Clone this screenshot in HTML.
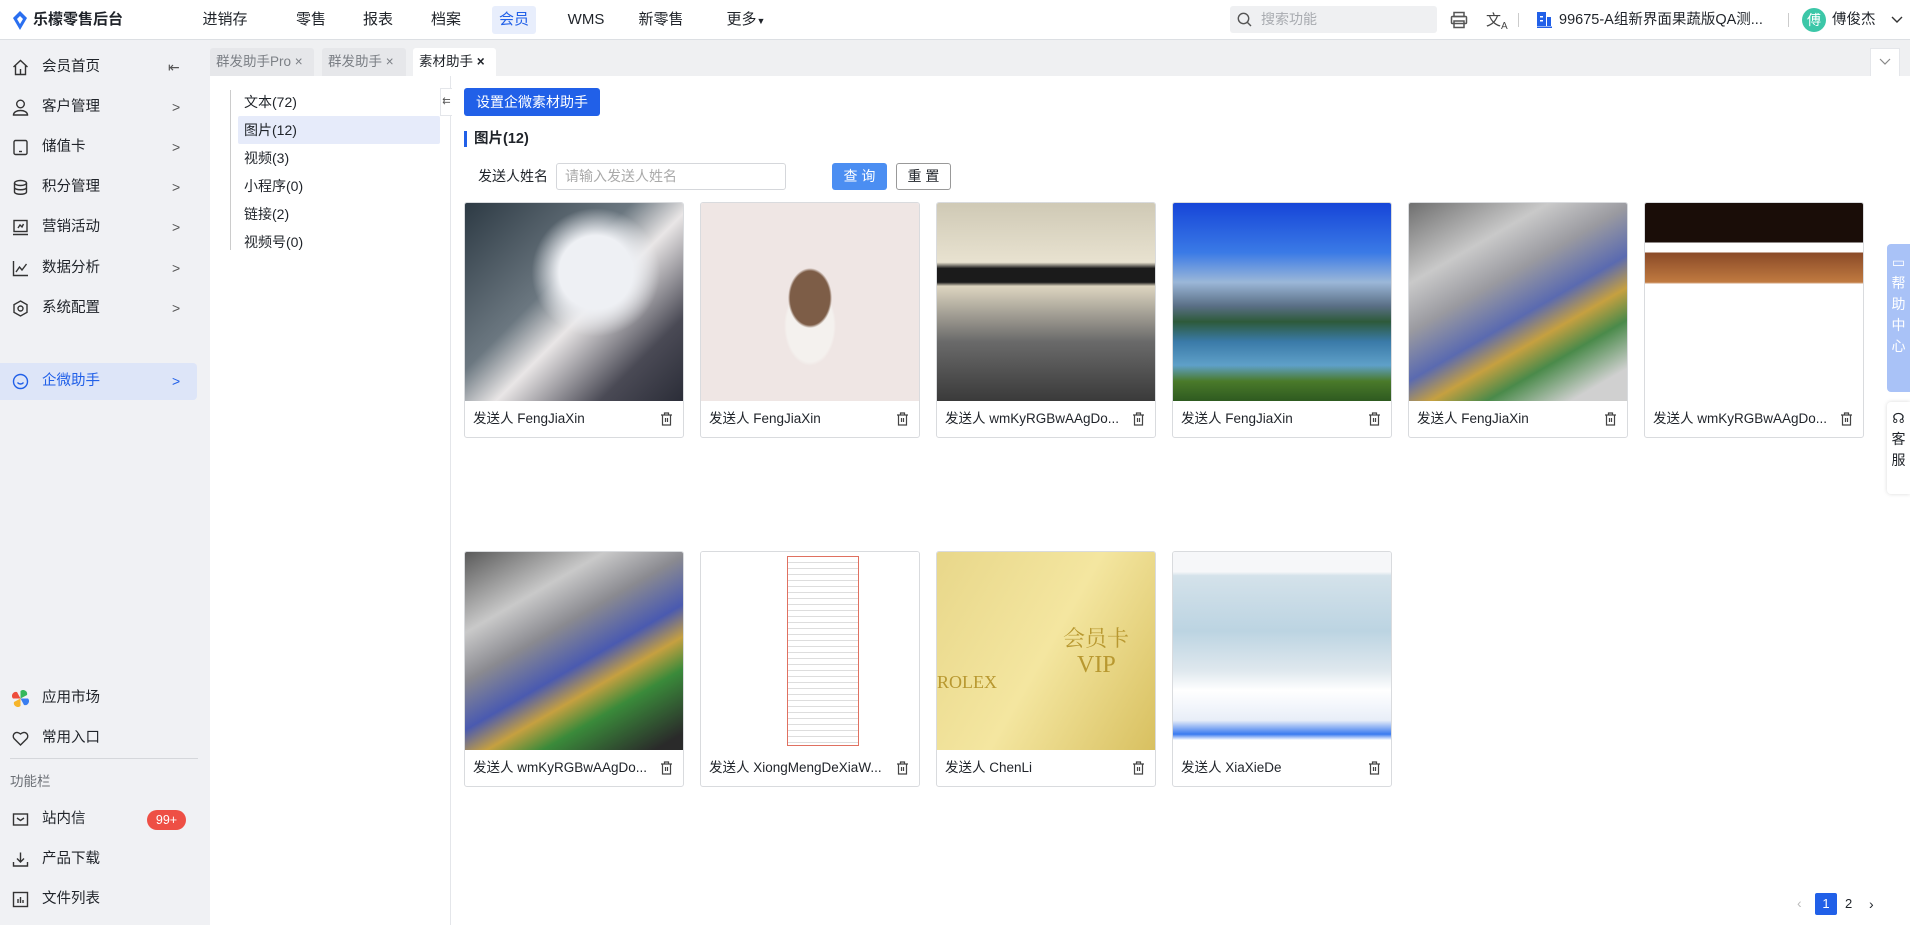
<!DOCTYPE html>
<html><head><meta charset="utf-8"><style>
*{box-sizing:border-box;margin:0;padding:0}
body{width:1910px;height:925px;overflow:hidden;background:#fff;font-family:"Liberation Sans","Noto Sans CJK SC",sans-serif;color:#1f2329;font-size:14px;position:relative}
.abs{position:absolute}
.top{left:0;top:0;width:1910px;height:40px;background:#fff;border-bottom:1px solid #dcdfe3}
.nav{top:0;height:40px;line-height:40px;font-size:15px;transform:translateX(-50%)}
.side{left:0;top:40px;width:210px;height:885px;background:#f0f1f4}
.si{left:0;width:197px;height:37px;font-size:14.5px;line-height:37px;padding-left:42px}
.si .ic{position:absolute;left:12px;top:10px;width:17px;height:17px}
.si .ar{position:absolute;left:172px;top:0;color:#555;font-size:14px}
.tabbar{left:210px;top:40px;width:1700px;height:36px;background:#eff0f2}
.tab{top:48px;height:28px;line-height:28px;font-size:13.5px;color:#7b7f85;background:#e6e7ea;padding:0 6px;border-radius:3px 3px 0 0}
.tree{left:210px;top:76px;width:241px;height:849px;border-right:1px solid #e4e6ea}
.ti{left:244px;font-size:14px;line-height:28px;height:28px}
.card{width:220px;height:236px;border:1px solid #d9dbde;border-radius:3px;overflow:hidden;background:#fff}
.card .img{height:198px}
.card .ft{height:36px;line-height:36px;padding-left:8px;font-size:13.5px;position:relative;white-space:nowrap}
.card .del{position:absolute;right:10px;top:11px;width:13px;height:14px}
</style></head><body>
<div class="abs top"></div>
<svg class="abs" style="left:12px;top:11px" width="16" height="19" viewBox="0 0 16 19"><path d="M8 0 L15 7 L8 19 L1 7Z" fill="#2a6ff0"/><path d="M8 5 L11 8 L8 13 L5 8Z" fill="#fff"/></svg>
<div class="abs" style="left:33px;top:10px;font-size:15px;font-weight:bold;line-height:20px">乐檬零售后台</div>
<div class="abs" style="left:492px;top:6px;width:44px;height:28px;background:#e8eefc;border-radius:3px"></div>
<div class="abs nav" style="left:225px">进销存</div>
<div class="abs nav" style="left:311px">零售</div>
<div class="abs nav" style="left:378px">报表</div>
<div class="abs nav" style="left:446px">档案</div>
<div class="abs nav" style="left:514px;color:#2160e8">会员</div>
<div class="abs nav" style="left:586px">WMS</div>
<div class="abs nav" style="left:661px">新零售</div>
<div class="abs nav" style="left:746px">更多<span style="font-size:9px">▼</span></div>
<div class="abs" style="left:1230px;top:6px;width:207px;height:27px;background:#eff0f2;border-radius:3px"></div>
<svg class="abs" style="left:1237px;top:12px" width="15" height="16"><circle cx="6.5" cy="6.5" r="5.2" fill="none" stroke="#555" stroke-width="1.4"/><path d="M10.5 10.5 L14 14" stroke="#555" stroke-width="1.4"/></svg>
<div class="abs" style="left:1261px;top:6px;line-height:27px;color:#a8abb0;font-size:14px">搜索功能</div>
<svg class="abs" style="left:1450px;top:11px" width="18" height="18" viewBox="0 0 18 18" fill="none" stroke="#555" stroke-width="1.5"><rect x="4" y="1.5" width="10" height="4"/><rect x="1.5" y="5.5" width="15" height="7" rx="1"/><rect x="4" y="10" width="10" height="6.5"/></svg>
<div class="abs" style="left:1486px;top:9px;font-size:15px;color:#444">文<sub style="font-size:10px">A</sub></div>
<div class="abs" style="left:1518px;top:13px;width:1px;height:14px;background:#ccc"></div>
<svg class="abs" style="left:1537px;top:12px" width="15" height="16"><rect x="0" y="0" width="9" height="14" fill="#2160e8"/><rect x="10" y="5" width="4" height="9" fill="#2160e8"/><rect x="0" y="14.5" width="15" height="1.5" fill="#2160e8"/><rect x="3" y="4" width="3" height="1.5" fill="#fff"/><rect x="3" y="8" width="3" height="1.5" fill="#fff"/></svg>
<div class="abs" style="left:1559px;top:10px;font-size:14.5px;line-height:20px">99675-A组新界面果蔬版QA测...</div>
<div class="abs" style="left:1788px;top:13px;width:1px;height:14px;background:#ccc"></div>
<div class="abs" style="left:1802px;top:8px;width:24px;height:24px;border-radius:50%;background:#3cc7a8;color:#fff;font-size:14px;text-align:center;line-height:24px">傅</div>
<div class="abs" style="left:1832px;top:10px;font-size:14.5px;line-height:20px">傅俊杰</div>
<svg class="abs" style="left:1891px;top:16px" width="12" height="8"><path d="M1 1 L6 6 L11 1" fill="none" stroke="#333" stroke-width="1.4"/></svg>

<div class="abs side"></div>
<div class="abs" style="left:0;top:363px;width:197px;height:37px;background:#dde5f8;border-radius:0 4px 4px 0"></div>
<div class="abs si" style="top:49px"><svg class="ic" viewBox="0 0 17 17" fill="none" stroke="#333" stroke-width="1.4"><path d="M1.5 8 L8.5 1.5 L15.5 8 M3.5 6.5 V15.5 H13.5 V6.5 M8.5 10 V15"/></svg>会员首页<span class="ar" style="left:168px">⇤</span></div>
<div class="abs si" style="top:89px"><svg class="ic" viewBox="0 0 17 17" fill="none" stroke="#333" stroke-width="1.4"><circle cx="8.5" cy="5" r="3.8"/><path d="M1.5 16 C1.5 10 15.5 10 15.5 16Z"/></svg>客户管理<span class="ar">&gt;</span></div>
<div class="abs si" style="top:129px"><svg class="ic" viewBox="0 0 17 17" fill="none" stroke="#333" stroke-width="1.4"><rect x="2" y="1.5" width="13" height="14" rx="1.5"/><path d="M7 12.5 H10"/></svg>储值卡<span class="ar">&gt;</span></div>
<div class="abs si" style="top:169px"><svg class="ic" viewBox="0 0 17 17" fill="none" stroke="#333" stroke-width="1.4"><ellipse cx="8.5" cy="4" rx="6" ry="2.5"/><path d="M2.5 4 V13 C2.5 16 14.5 16 14.5 13 V4 M2.5 8.5 C2.5 11.5 14.5 11.5 14.5 8.5"/></svg>积分管理<span class="ar">&gt;</span></div>
<div class="abs si" style="top:209px"><svg class="ic" viewBox="0 0 17 17" fill="none" stroke="#333" stroke-width="1.4"><rect x="2" y="1.5" width="13" height="11"/><path d="M1 15.5 H16 M6 9 L8 6 L10 8 L11.5 5"/></svg>营销活动<span class="ar">&gt;</span></div>
<div class="abs si" style="top:250px"><svg class="ic" viewBox="0 0 17 17" fill="none" stroke="#333" stroke-width="1.4"><path d="M1.5 1 V15.5 H16 M4 12 L7.5 7 L10 10 L14.5 4"/></svg>数据分析<span class="ar">&gt;</span></div>
<div class="abs si" style="top:290px"><svg class="ic" viewBox="0 0 17 17" fill="none" stroke="#333" stroke-width="1.4"><path d="M8.5 1 L15 4.7 V12.3 L8.5 16 L2 12.3 V4.7Z"/><circle cx="8.5" cy="8.5" r="2.5"/></svg>系统配置<span class="ar">&gt;</span></div>
<div class="abs si" style="top:363px;color:#2160e8"><svg class="ic" viewBox="0 0 17 17" fill="none" stroke="#2160e8" stroke-width="1.4"><circle cx="8.5" cy="8.5" r="7"/><path d="M5.5 9.5 C7 11.5 10 11.5 11.5 9.5"/></svg>企微助手<span class="ar" style="color:#2160e8">&gt;</span></div>
<div class="abs si" style="top:680px"><svg class="ic" viewBox="0 0 17 17"><path d="M8.5 8.5 L8.5 1 A4 4 0 0 1 15 5Z" fill="#34b75a"/><path d="M8.5 8.5 L16 8.5 A4 4 0 0 1 12 15Z" fill="#3a7ef0"/><path d="M8.5 8.5 L8.5 16 A4 4 0 0 1 2 12Z" fill="#f6b52a"/><path d="M8.5 8.5 L1 8.5 A4 4 0 0 1 5 2Z" fill="#ee4d3c"/></svg>应用市场</div>
<div class="abs si" style="top:720px"><svg class="ic" viewBox="0 0 17 17" fill="none" stroke="#333" stroke-width="1.4"><path d="M8.5 15 L2 8.5 C-0.5 5 3.5 0 8.5 4 C13.5 0 17.5 5 15 8.5Z"/></svg>常用入口</div>
<div class="abs" style="left:10px;top:758px;width:188px;height:1px;background:#d5d7db"></div>
<div class="abs" style="left:10px;top:770px;font-size:13.5px;color:#6b6f75">功能栏</div>
<div class="abs si" style="top:801px"><svg class="ic" viewBox="0 0 17 17" fill="none" stroke="#333" stroke-width="1.4"><rect x="1.5" y="3" width="14" height="11"/><path d="M5 7 L8.5 9.5 L12 7"/></svg>站内信</div>
<div class="abs" style="left:147px;top:810px;width:39px;height:20px;border-radius:10px;background:#ee4f45;color:#fff;font-size:12.5px;text-align:center;line-height:20px">99+</div>
<div class="abs si" style="top:841px"><svg class="ic" viewBox="0 0 17 17" fill="none" stroke="#333" stroke-width="1.4"><path d="M8.5 1.5 V10.5 M5 7.5 L8.5 11 L12 7.5 M1.5 11 V15 H15.5 V11"/></svg>产品下载</div>
<div class="abs si" style="top:881px"><svg class="ic" viewBox="0 0 17 17" fill="none" stroke="#333" stroke-width="1.4"><rect x="1.5" y="1.5" width="14" height="14"/><path d="M6 12 V8 M8.5 12 V6 M11 12 V9"/></svg>文件列表</div>

<div class="abs tabbar"></div>
<div class="abs tab" style="left:210px;width:104px">群发助手Pro ×</div>
<div class="abs tab" style="left:322px;width:84px">群发助手 ×</div>
<div class="abs tab" style="left:413px;width:83px;background:#fff;color:#1f2329">素材助手 <b>×</b></div>
<div class="abs" style="left:1870px;top:48px;width:30px;height:28px;background:#fff;border:1px solid #e4e6ea;border-bottom:none"></div>
<svg class="abs" style="left:1879px;top:58px" width="12" height="8"><path d="M1 1 L6 6 L11 1" fill="none" stroke="#888" stroke-width="1.2"/></svg>

<div class="abs tree"></div>
<div class="abs" style="left:230px;top:90px;width:1px;height:160px;background:#ccc"></div>
<div class="abs" style="left:238px;top:116px;width:202px;height:28px;background:#e6ebfa;border-radius:2px"></div>
<div class="abs ti" style="top:88px">文本(72)</div>
<div class="abs ti" style="top:116px">图片(12)</div>
<div class="abs ti" style="top:144px">视频(3)</div>
<div class="abs ti" style="top:172px">小程序(0)</div>
<div class="abs ti" style="top:200px">链接(2)</div>
<div class="abs ti" style="top:228px">视频号(0)</div>
<div class="abs" style="left:440px;top:88px;width:12px;height:28px;background:#fff;border:1px solid #e4e6ea;border-right:none;font-size:10px;line-height:26px;color:#555;text-align:center">⇇</div>

<div class="abs" style="left:464px;top:88px;width:136px;height:28px;background:#2160e8;border-radius:3px;color:#fff;font-size:14px;text-align:center;line-height:28px">设置企微素材助手</div>
<div class="abs" style="left:464px;top:131px;width:3px;height:16px;background:#2160e8"></div>
<div class="abs" style="left:474px;top:129px;font-size:14.5px;font-weight:bold;line-height:20px">图片(12)</div>
<div class="abs" style="left:478px;top:166px;font-size:14px;line-height:20px">发送人姓名</div>
<div class="abs" style="left:556px;top:163px;width:230px;height:27px;border:1px solid #d5d7db;border-radius:3px;padding-left:8px;line-height:25px;color:#aaa;font-size:14px">请输入发送人姓名</div>
<div class="abs" style="left:832px;top:163px;width:55px;height:27px;background:#4b8ef2;border-radius:3px;color:#fff;text-align:center;line-height:27px;font-size:14px">查 询</div>
<div class="abs" style="left:896px;top:163px;width:55px;height:27px;border:1px solid #999;border-radius:3px;text-align:center;line-height:25px;font-size:14px">重 置</div>

<div class="abs card" style="left:464px;top:202px"><div class="img" style="background:radial-gradient(circle at 60% 35%,#eef0f4 0 20%,transparent 35%),linear-gradient(135deg,#2d3a44,#6b7780 40%,#e9e6e6 55%,#4a4a55 80%,#2b2d38)"></div><div class="ft">发送人 FengJiaXin<svg class="del" viewBox="0 0 13 14" fill="none" stroke="#444" stroke-width="1.2"><path d="M1 3 H12 M4.5 3 V1 H8.5 V3 M2.5 3 V13 H10.5 V3 M5.5 6 V10 M7.5 6 V10"/></svg></div></div>
<div class="abs card" style="left:700px;top:202px"><div class="img" style="background:radial-gradient(ellipse 22px 30px at 50% 48%,#7d5d47 0 90%,transparent 100%),radial-gradient(ellipse 26px 40px at 50% 62%,#f4f1ee 0 90%,transparent 100%),#efe6e4"></div><div class="ft">发送人 FengJiaXin<svg class="del" viewBox="0 0 13 14" fill="none" stroke="#444" stroke-width="1.2"><path d="M1 3 H12 M4.5 3 V1 H8.5 V3 M2.5 3 V13 H10.5 V3 M5.5 6 V10 M7.5 6 V10"/></svg></div></div>
<div class="abs card" style="left:936px;top:202px"><div class="img" style="background:linear-gradient(180deg,#cfc9b5 0,#e8e2d0 30%,#1b1b1b 33% 40%,#ddd5c0 42%,#6a6a6a 70%,#3a3a3a)"></div><div class="ft">发送人 wmKyRGBwAAgDo...<svg class="del" viewBox="0 0 13 14" fill="none" stroke="#444" stroke-width="1.2"><path d="M1 3 H12 M4.5 3 V1 H8.5 V3 M2.5 3 V13 H10.5 V3 M5.5 6 V10 M7.5 6 V10"/></svg></div></div>
<div class="abs card" style="left:1172px;top:202px"><div class="img" style="background:linear-gradient(180deg,#1645d8 0,#3a7ae6 25%,#9bb7d8 40%,#5a6f86 52%,#2d5a3a 60%,#3a7aa8 70%,#5fa0c8 82%,#4a7a2a 90%,#2e5a20)"></div><div class="ft">发送人 FengJiaXin<svg class="del" viewBox="0 0 13 14" fill="none" stroke="#444" stroke-width="1.2"><path d="M1 3 H12 M4.5 3 V1 H8.5 V3 M2.5 3 V13 H10.5 V3 M5.5 6 V10 M7.5 6 V10"/></svg></div></div>
<div class="abs card" style="left:1408px;top:202px"><div class="img" style="background:linear-gradient(150deg,#6f6f6f 0,#c9c9c9 25%,#9a9aa0 40%,#5a6ab0 55%,#c6a040 65%,#4a8a4a 75%,#d0d0d0 90%)"></div><div class="ft">发送人 FengJiaXin<svg class="del" viewBox="0 0 13 14" fill="none" stroke="#444" stroke-width="1.2"><path d="M1 3 H12 M4.5 3 V1 H8.5 V3 M2.5 3 V13 H10.5 V3 M5.5 6 V10 M7.5 6 V10"/></svg></div></div>
<div class="abs card" style="left:1644px;top:202px"><div class="img" style="background:linear-gradient(180deg,#1a0d08 0,#1a0d08 20%,#fff 20%,#fff 25%,#8a4a28 25%,#c07a40 40%,#fff 41%,#fff 100%)"></div><div class="ft">发送人 wmKyRGBwAAgDo...<svg class="del" viewBox="0 0 13 14" fill="none" stroke="#444" stroke-width="1.2"><path d="M1 3 H12 M4.5 3 V1 H8.5 V3 M2.5 3 V13 H10.5 V3 M5.5 6 V10 M7.5 6 V10"/></svg></div></div>

<div class="abs card" style="left:464px;top:551px"><div class="img" style="background:linear-gradient(150deg,#5a5a5a 0,#c9c9c9 25%,#8a8a90 40%,#4a5ab0 55%,#c6a040 65%,#3a8a3a 75%,#2a2a2a 95%)"></div><div class="ft">发送人 wmKyRGBwAAgDo...<svg class="del" viewBox="0 0 13 14" fill="none" stroke="#444" stroke-width="1.2"><path d="M1 3 H12 M4.5 3 V1 H8.5 V3 M2.5 3 V13 H10.5 V3 M5.5 6 V10 M7.5 6 V10"/></svg></div></div>
<div class="abs card" style="left:700px;top:551px"><div class="img" style="background:#fff;position:relative"><div style="position:absolute;left:86px;top:4px;width:72px;height:190px;border:1px solid #e07060;background:repeating-linear-gradient(180deg,#fff 0 5px,#ddd 5px 6px)"></div></div><div class="ft">发送人 XiongMengDeXiaW...<svg class="del" viewBox="0 0 13 14" fill="none" stroke="#444" stroke-width="1.2"><path d="M1 3 H12 M4.5 3 V1 H8.5 V3 M2.5 3 V13 H10.5 V3 M5.5 6 V10 M7.5 6 V10"/></svg></div></div>
<div class="abs card" style="left:936px;top:551px"><div class="img" style="background:linear-gradient(120deg,#e8d78a,#f4e6a0 50%,#d8c060);position:relative;color:#b89830;font-family:'Liberation Serif',serif"><div style="position:absolute;left:126px;top:70px;font-size:22px;font-family:'Noto Serif CJK SC',serif">会员卡</div><div style="position:absolute;left:140px;top:100px;font-size:24px">VIP</div><div style="position:absolute;left:0;top:120px;font-size:18px">ROLEX</div></div><div class="ft">发送人 ChenLi<svg class="del" viewBox="0 0 13 14" fill="none" stroke="#444" stroke-width="1.2"><path d="M1 3 H12 M4.5 3 V1 H8.5 V3 M2.5 3 V13 H10.5 V3 M5.5 6 V10 M7.5 6 V10"/></svg></div></div>
<div class="abs card" style="left:1172px;top:551px"><div class="img" style="background:linear-gradient(180deg,#f6f7f9 0,#f6f7f9 10%,#d4e2ea 12%,#bcd4e2 40%,#dfe8ee 60%,#fff 70%,#e8eef8 85%,#3a7af0 92%,#fff 95%)"></div><div class="ft">发送人 XiaXieDe<svg class="del" viewBox="0 0 13 14" fill="none" stroke="#444" stroke-width="1.2"><path d="M1 3 H12 M4.5 3 V1 H8.5 V3 M2.5 3 V13 H10.5 V3 M5.5 6 V10 M7.5 6 V10"/></svg></div></div>

<div class="abs" style="left:1887px;top:244px;width:23px;height:148px;background:#a9c2f7;border-radius:4px 0 0 4px;color:#fff;font-size:14px;text-align:center;padding-top:8px;line-height:21px">▭<br>帮<br>助<br>中<br>心</div>
<div class="abs" style="left:1887px;top:402px;width:23px;height:92px;background:#fff;border-radius:4px 0 0 4px;box-shadow:0 0 4px rgba(0,0,0,.15);font-size:14px;text-align:center;padding-top:6px;line-height:21px">☊<br>客<br>服</div>

<div class="abs" style="left:1797px;top:895px;color:#bbb;font-size:14px">‹</div>
<div class="abs" style="left:1815px;top:893px;width:22px;height:22px;background:#2160e8;color:#fff;border-radius:2px;text-align:center;line-height:22px;font-size:13px">1</div>
<div class="abs" style="left:1845px;top:893px;line-height:22px;font-size:13px">2</div>
<div class="abs" style="left:1869px;top:893px;line-height:22px;font-size:14px">›</div>
</body></html>
